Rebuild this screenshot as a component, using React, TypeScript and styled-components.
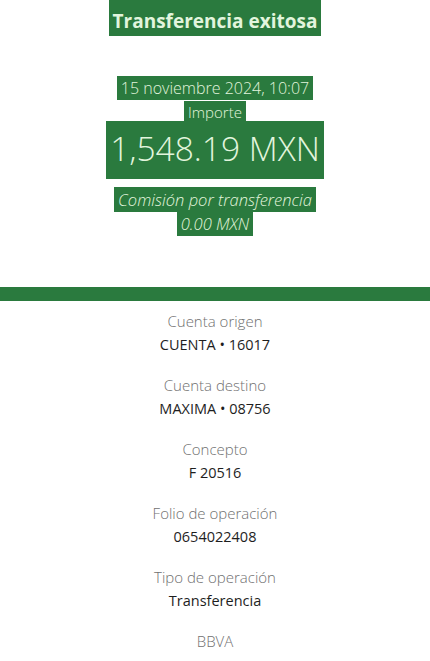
import React from "react";
import styled, { createGlobalStyle } from "styled-components";

const Global = createGlobalStyle`
  html, body { margin: 0; padding: 0; background: #ffffff; }
  body { font-family: "Open Sans", Lato, sans-serif; }
`;

const Page = styled.div`
  width: 430px;
  min-height: 661px;
  background: #ffffff;
  display: flex;
  flex-direction: column;
  align-items: center;
  overflow: hidden;
`;

const Hero = styled.section`
  display: flex;
  flex-direction: column;
  align-items: center;
  width: 100%;
`;

const Line = styled.div<{ $size: number; $lh: number; $weight?: number; $italic?: boolean; $mt?: number }>`
  font-size: ${(p) => p.$size}px;
  line-height: ${(p) => p.$lh}px;
  font-weight: ${(p) => p.$weight ?? 300};
  font-style: ${(p) => (p.$italic ? "italic" : "normal")};
  margin-top: ${(p) => p.$mt ?? 0}px;
  text-align: center;
  white-space: nowrap;
`;

const Mark = styled.span<{ $pad?: string }>`
  background: #2a7a3e;
  color: #e2f5dd;
  padding: ${(p) => p.$pad ?? "1px 4px"};
`;

const Bar = styled.div`
  width: 100%;
  height: 14px;
  background: #2a7a3e;
  margin-top: 51px;
`;

const Details = styled.section`
  display: flex;
  flex-direction: column;
  align-items: center;
  gap: 16px;
  padding-top: 8px;
  width: 100%;
`;

const Item = styled.div`
  display: flex;
  flex-direction: column;
  align-items: center;
`;

const Label = styled.div`
  font-size: 15px;
  line-height: 24px;
  font-weight: 300;
  color: #707070;
`;

const Value = styled.div`
  font-size: 14.5px;
  line-height: 24px;
  font-weight: 400;
  color: #1e1e1e;
`;

const items = [
  ["Cuenta origen", "CUENTA • 16017"],
  ["Cuenta destino", "MAXIMA • 08756"],
  ["Concepto", "F 20516"],
  ["Folio de operación", "0654022408"],
  ["Tipo de operación", "Transferencia"],
];

export default function App() {
  return (
    <Page>
      <Global />
      <Hero>
        <Line $size={19} $lh={30} $weight={700} $mt={6}>
          <Mark $pad="12px 4px 2px">Transferencia exitosa</Mark>
        </Line>
        <Line $size={16} $lh={24} $mt={40}>
          <Mark>15 noviembre 2024, 10:07</Mark>
        </Line>
        <Line $size={15} $lh={24}>
          <Mark>Importe</Mark>
        </Line>
        <Line $size={33.5} $lh={44} $mt={2}>
          <Mark $pad="4px 4px 8px">1,548.19 MXN</Mark>
        </Line>
        <Line $size={16.5} $lh={24} $italic $mt={18}>
          <Mark>Comisión por transferencia</Mark>
        </Line>
        <Line $size={16.5} $lh={24} $italic>
          <Mark>0.00 MXN</Mark>
        </Line>
      </Hero>
      <Bar />
      <Details>
        {items.map(([l, v]) => (
          <Item key={l}>
            <Label>{l}</Label>
            <Value>{v}</Value>
          </Item>
        ))}
        <Item>
          <Label>BBVA</Label>
        </Item>
      </Details>
    </Page>
  );
}
